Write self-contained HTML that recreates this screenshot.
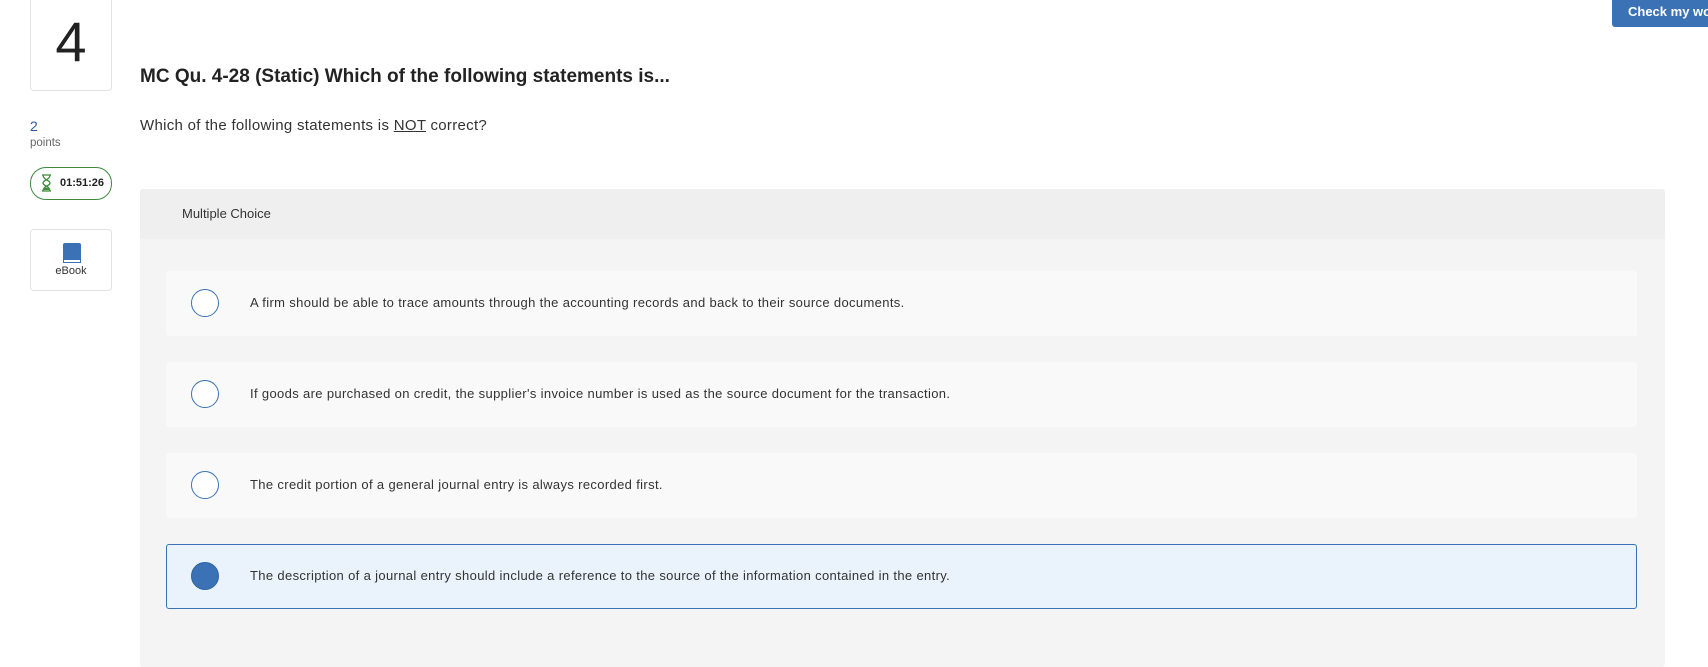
<!DOCTYPE html>
<html><head><style>
body{margin:0;width:1708px;height:667px;background:#fff;font-family:"Liberation Sans",sans-serif;position:relative;overflow:hidden;color:#222}
.abs{position:absolute}
.box{border:1px solid #e3e3e3;border-radius:4px;background:#fff;box-sizing:border-box}
.opt{position:absolute;left:166px;width:1471px;height:65px;background:#f9f9f9;border-radius:3px;box-sizing:border-box}
.rad{position:absolute;left:25px;top:18px;width:28px;height:28px;border:1.5px solid #3a72b5;border-radius:50%;box-sizing:border-box;background:#fff}
.opt span{position:absolute;left:84px;top:24px;font-size:13px;letter-spacing:0.35px;color:#333;white-space:nowrap}
</style></head><body>
<div class="abs box" style="left:30px;top:-4px;width:82px;height:95px;"></div>
<div class="abs" style="left:30px;top:12px;width:82px;text-align:center;font-size:56px;line-height:60px;color:#222">4</div>
<div class="abs" style="left:140px;top:66px;font-size:19px;font-weight:bold;color:#222">MC Qu. 4-28 (Static) Which of the following statements is...</div>
<div class="abs" style="left:30px;top:118px;font-size:14px;color:#2a5d9e">2</div>
<div class="abs" style="left:30px;top:137px;font-size:11.5px;color:#666">points</div>
<div class="abs" style="left:30px;top:167px;width:82px;height:33px;border:1.5px solid #3f8a3f;border-radius:16px;box-sizing:border-box"></div>
<svg class="abs" style="left:41px;top:174px" width="11" height="18" viewBox="0 0 11 18"><path d="M1 1h9M1 17h9M2 1c0 5 7 5 7 8s-7 3-7 8M9 1c0 5-7 5-7 8s7 3 7 8" fill="none" stroke="#3f8a3f" stroke-width="1.3"/><path d="M2.5 16c1-3 5-3 6 0z" fill="#3f8a3f"/></svg>
<div class="abs" style="left:60px;top:177px;font-size:11px;font-weight:bold;color:#222">01:51:26</div>
<div class="abs box" style="left:30px;top:229px;width:82px;height:62px"></div>
<div class="abs" style="left:63px;top:243px;width:18px;height:20px;background:#3a72b5;border-radius:2px"></div>
<div class="abs" style="left:63px;top:259px;width:18px;height:4px;background:#fff;border:1px solid #3a72b5;box-sizing:border-box"></div>
<div class="abs" style="left:30px;top:265px;width:82px;text-align:center;font-size:11px;color:#333">eBook</div>
<div class="abs" style="left:140px;top:117px;font-size:15px;letter-spacing:0.3px;color:#333">Which of the following statements is <u>NOT</u> correct?</div>
<div class="abs" style="left:1612px;top:0;width:110px;height:27px;background:#3a72b5;border-radius:0 0 0 3px;color:#fff;font-weight:bold;font-size:13px;line-height:24px;padding-left:16px;box-sizing:border-box;white-space:nowrap">Check my work</div>
<div class="abs" style="left:140px;top:189px;width:1525px;height:478px;background:#f4f4f4;border-radius:3px"></div>
<div class="abs" style="left:140px;top:189px;width:1525px;height:50px;background:#efefef;border-radius:3px 3px 0 0"></div>
<div class="abs" style="left:182px;top:206px;font-size:13px;color:#333">Multiple Choice</div>
<div class="opt" style="top:271px"><div class="rad"></div><span>A firm should be able to trace amounts through the accounting records and back to their source documents.</span></div>
<div class="opt" style="top:362px"><div class="rad"></div><span>If goods are purchased on credit, the supplier's invoice number is used as the source document for the transaction.</span></div>
<div class="opt" style="top:453px"><div class="rad"></div><span>The credit portion of a general journal entry is always recorded first.</span></div>
<div class="opt" style="top:544px;background:#eaf2fb;border:1px solid #3a72b5"><div class="rad" style="background:#3a72b5;border-color:#2f62a0;left:24px;top:17px"></div><span style="left:83px;top:23px">The description of a journal entry should include a reference to the source of the information contained in the entry.</span></div>
</body></html>
